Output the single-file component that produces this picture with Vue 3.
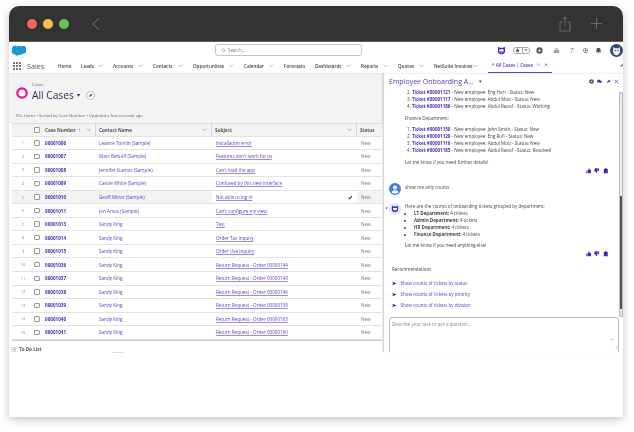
<template>
  <div class="page">
    <div class="window">
      <div class="titlebar">
        <span class="light red"></span>
        <span class="light yellow"></span>
        <span class="light green"></span>
        <svg class="back" viewBox="0 0 8 14"><path d="M7 1 1 7l6 6" /></svg>
        <svg class="share" viewBox="0 0 12 16"><path d="M3.500 6H1v9h10V6H8.500M6 10V1M3.500 3.300 6 1l2.500 2.300" /></svg>
        <svg class="plus" viewBox="0 0 12 12"><path d="M6 0v12M0 6h12" /></svg>
      </div>

      <header class="topbar">
        <svg class="cloud" viewBox="0 0 16 11"><path d="M6.500 1.600A2.900 2.900 0 0 1 11 1.200 3 3 0 0 1 15.800 4.500 2.800 2.800 0 0 1 12.700 8.800 2.500 2.500 0 0 1 8.900 9.800 3 3 0 0 1 3.800 9.300 2.500 2.500 0 0 1 1.600 5 2.900 2.900 0 0 1 6.500 1.600Z" /></svg>
        <div class="search">
          <svg viewBox="0 0 8 8"><circle cx="3.400" cy="3.400" r="2.300" /><path d="m5.200 5.200 2 2" /></svg>
          <span>Search...</span>
        </div>
        <div class="actions">
          <svg class="bot" viewBox="0 0 12 12"><use href="#bot-face" /></svg>
          <div class="favorites">
            <svg viewBox="0 0 6 6"><path d="m3 .3.800 1.800 1.900.2-1.400 1.300.4 1.900L3 4.600l-1.700.9.400-1.900L.3 2.300l1.900-.2Z" /></svg>
            <i></i>
            <svg class="fav-caret" viewBox="0 0 6 6"><path d="M1 2h4L3 4.500Z" /></svg>
          </div>
          <svg class="act add" viewBox="0 0 10 10"><circle cx="5" cy="5" r="4.500" fill="#555" /><path d="M5 2.500v5M2.500 5h5" stroke="#fff" /></svg>
          <svg class="act trail" viewBox="0 0 10 10"><path d="M5 1.500 8 5H2ZM1.500 6.500h7v1.500h-7Z" fill="none" stroke="#666" stroke-width=".9" /></svg>
          <span class="help">?</span>
          <svg class="act gear" viewBox="0 0 10 10"><circle cx="5" cy="5" r="2.800" fill="none" stroke="#666" stroke-width="1.500" stroke-dasharray="1.500 .7" /><circle cx="5" cy="5" r="1" fill="#666" /></svg>
          <svg class="act bell" viewBox="0 0 10 10"><path d="M5 1a3 3 0 0 1 3 3v2l1 1.500H1L2 6V4a3 3 0 0 1 3-3ZM4 8.300h2L5 9.500Z" fill="#555" /></svg>
          <svg class="avatar" viewBox="0 0 14 14">
            <circle cx="7" cy="7" r="7" fill="#2f4a6d" />
            <path d="M3.500 3 5 4.500h4L10.500 3 10.800 8C10.500 10.500 9 12 7 12S3.500 10.500 3.200 8Z" fill="#f4f1e8" />
            <circle cx="5.500" cy="7" r=".7" fill="#333" /><circle cx="8.500" cy="7" r=".7" fill="#333" />
          </svg>
        </div>
      </header>

      <nav class="navbar">
        <div class="launcher">
          <span v-for="n in 9" :key="n"></span>
        </div>
        <span class="app-name">Sales</span>
        <div class="nav-items">
          <div v-for="item in navItems" :key="item.label" class="nav-item">
            <span>{{ item.label }}</span>
            <svg v-if="item.menu" class="chev" viewBox="0 0 6 4"><path d="m.5.700 2.500 2.500L5.500.700" /></svg>
          </div>
          <div class="nav-tab">
            <span>* All Cases | Cases</span>
            <svg class="chev tab-chev" viewBox="0 0 6 4"><path d="m.5.700 2.500 2.500L5.500.700" /></svg>
            <svg class="tab-x" viewBox="0 0 6 6"><path d="m1 1 4 4M5 1 1 5" /></svg>
          </div>
        </div>
        <svg class="nav-pencil" viewBox="0 0 6 6"><path d="M.5 5.500 1 4 4.200.800l1 1L2 5Z" /></svg>
      </nav>

      <main class="content">
        <section class="left">
          <div class="list-head">
            <div class="title-row">
              <svg class="case-icon" viewBox="0 0 12 12"><circle cx="6" cy="6" r="4.700" fill="#fff" stroke="#e5178a" stroke-width="2.200" /><rect x="3" y="4" width="6" height="4.500" rx="1" fill="#f7f7f7" /></svg>
              <div>
                <div class="crumb">Cases</div>
                <div class="title">All Cases <span class="caret">▾</span>
                  <span class="pin">
                    <svg viewBox="0 0 6 6"><path d="M1 5 2.200 2.700 4 1 5 2 3.300 3.800Z" /></svg>
                  </span>
                </div>
              </div>
            </div>
            <div class="meta">50+ Items • Sorted by Case Number • Updated a few seconds ago</div>
          </div>

          <div class="table">
            <div class="row head">
              <div class="cell"></div>
              <div class="cell"><span class="check"></span></div>
              <div class="cell sep">Case Number <span class="arrow">↑</span><svg class="chev" viewBox="0 0 6 4"><path d="m.5.700 2.500 2.500L5.500.700" /></svg></div>
              <div class="cell sep">Contact Name<svg class="chev" viewBox="0 0 6 4"><path d="m.5.700 2.500 2.500L5.500.700" /></svg></div>
              <div class="cell sep">Subject<svg class="chev" viewBox="0 0 6 4"><path d="m.5.700 2.500 2.500L5.500.700" /></svg></div>
              <div class="cell">Status</div>
            </div>
            <div v-for="(c, i) in cases" :key="c.id" class="row" :class="{ hover: i === 4 }">
              <div class="cell num">{{ i + 1 }}</div>
              <div class="cell"><span class="check"></span></div>
              <div class="cell case-id">{{ c.id }}</div>
              <div class="cell contact">{{ c.contact }}</div>
              <div class="cell subject">
                <span>{{ c.subject }}</span>
                <svg v-if="i === 4" class="edit" viewBox="0 0 6 6"><path d="M.5 5.500 1 4 4.200.800l1 1L2 5Z" /></svg>
              </div>
              <div class="cell status">New</div>
            </div>
          </div>

          <div class="todo">
            <svg viewBox="0 0 6 6"><path d="M0 1h1M2 1h4M0 3h1M2 3h4M0 5h1M2 5h4" /></svg>
            <span>To Do List</span>
            <i class="handle"></i>
          </div>
        </section>

        <aside class="right">
          <div class="chat-head">
            <span class="chat-title">Employee Onboarding A...</span>
            <span class="chat-caret">▾</span>
            <div class="chat-tools">
              <svg viewBox="0 0 6 6"><circle cx="3" cy="3" r="2.800" fill="#555" /><circle cx="3" cy="3" r="1" fill="#ddd" /></svg>
              <svg viewBox="0 0 6 6"><path d="M.5 1h3.500v3H1.800L.5 5ZM4.500 2.200h1V5.500L4.300 4.600H2.500" fill="#3a2bb5" /></svg>
              <svg viewBox="0 0 6 6"><path d="M1 5 2.200 2.700 3.500.8l1.800 1.500L3.300 3.800Z" fill="#3a2bb5" /></svg>
              <svg viewBox="0 0 6 6"><path d="m1 1 4 4M5 1 1 5" fill="none" stroke="#3a2bb5" stroke-width=".8" /></svg>
            </div>
          </div>

          <div class="chat-body">
            <div class="messages">
              <ol class="tickets" start="2">
                <li v-for="t in ticketsTop" :key="t.id"><b>Ticket #{{ t.id }}</b> - New employee: {{ t.name }} - Status: {{ t.status }}</li>
              </ol>
              <p class="dept">Finance Department:</p>
              <ol class="tickets second">
                <li v-for="t in ticketsFinance" :key="t.id"><b>Ticket #{{ t.id }}</b> - New employee: {{ t.name }} - Status: {{ t.status }}</li>
              </ol>
              <p class="closing">Let me know if you need further details!</p>
              <div class="feedback">
                <svg viewBox="0 0 6 6"><use href="#thumb" /></svg>
                <svg viewBox="0 0 6 6" class="flip"><use href="#thumb" /></svg>
                <svg viewBox="0 0 6 6"><use href="#clip" /></svg>
              </div>

              <div class="msg user">
                <svg class="msg-avatar" viewBox="0 0 12 12">
                  <circle cx="6" cy="6" r="6" fill="#3b82e0" />
                  <circle cx="6" cy="4.600" r="2" fill="#fff" />
                  <path d="M2.500 9.500C3 7.800 4.500 7.300 6 7.300s3 .5 3.500 2.200C8.500 10.300 7.300 10.600 6 10.600S3.500 10.300 2.500 9.500Z" fill="#fff" />
                </svg>
                <span>show me only counts</span>
              </div>

              <div class="msg bot-msg">
                <i class="pointer"></i>
                <svg class="msg-avatar bot-avatar" viewBox="0 0 12 12"><circle cx="6" cy="6" r="6" fill="#dfe5fb" /><g transform="translate(2 2) scale(.667)"><use href="#bot-face" /></g></svg>
                <div>
                  <p>Here are the counts of onboarding tickets grouped by department:</p>
                  <ul class="counts">
                    <li v-for="d in departments" :key="d"><b>{{ d }}:</b> 4 tickets</li>
                  </ul>
                </div>
              </div>
              <p class="closing after">Let me know if you need anything else!</p>
              <div class="feedback">
                <svg viewBox="0 0 6 6"><use href="#thumb" /></svg>
                <svg viewBox="0 0 6 6" class="flip"><use href="#thumb" /></svg>
                <svg viewBox="0 0 6 6"><use href="#clip" /></svg>
              </div>

              <div class="recs">
                <div class="recs-label">Recommendations</div>
                <div v-for="r in recommendations" :key="r" class="rec">
                  <svg viewBox="0 0 6 6"><path d="M.5 1 5.500 3 .5 5l.6-2Z" /></svg>
                  <span>{{ r }}</span>
                </div>
              </div>
            </div>
            <div class="scrollbar">
              <span class="sb-up"></span>
              <span class="sb-thumb"></span>
              <span class="sb-down"></span>
            </div>
          </div>

          <div class="composer">
            <span>Describe your task or ask a question...</span>
            <svg class="send one" viewBox="0 0 6 6"><path d="M.5 1 5.500 3 .5 5l.6-2Z" /></svg>
            <svg class="send two" viewBox="0 0 6 6"><path d="M.5 1 5.500 3 .5 5l.6-2Z" /></svg>
          </div>
        </aside>
      </main>
    </div>

    <svg class="defs" width="0" height="0">
      <defs>
        <g id="bot-face">
          <path d="M1.500 1 4 2.300h4L10.500 1l.3 5.500C10.800 9.500 8.500 11 6 11S1.200 9.500 1.200 6.500Z" fill="#3d2bc0" />
          <rect x="2.800" y="4.400" width="6.400" height="3" rx="1.500" fill="#fff" />
          <path d="M4 9h4" stroke="#fff" stroke-width=".6" />
        </g>
        <path id="thumb" d="M.3 2.700h1.200v3H.3ZM2 2.700 3.200.3c.6 0 .9.400.8 1L3.800 2.300h1.700c.3 0 .4.300.3.600L5.100 5.400c-.1.200-.2.300-.5.300H2Z" />
        <path id="clip" d="M.8 1h1l.3-.7h1.800L4.200 1h1v4.800H.8Z" />
      </defs>
    </svg>
  </div>
</template>

<script setup>
const navItems = [
  { label: 'Home' },
  { label: 'Leads', menu: true },
  { label: 'Accounts', menu: true },
  { label: 'Contacts', menu: true },
  { label: 'Opportunities', menu: true },
  { label: 'Calendar', menu: true },
  { label: 'Forecasts' },
  { label: 'Dashboards', menu: true },
  { label: 'Reports', menu: true },
  { label: 'Quotes', menu: true },
  { label: 'NetSuite Invoices', menu: true }
];

const returns = ['00000144', '00000143', '00000146', '00000159', '00000163', '00000160'];

const cases = [
  { id: '00001006', contact: 'Leanne Tomlin (Sample)', subject: 'Installation error' },
  { id: '00001007', contact: 'Marc Benioff (Sample)', subject: "Features don't work for us" },
  { id: '00001008', contact: 'Jennifer Stamos (Sample)', subject: "Can't load the app" },
  { id: '00001009', contact: 'Carole White (Sample)', subject: 'Confused by this new interface' },
  { id: '00001010', contact: 'Geoff Minor (Sample)', subject: 'Not able to log in' },
  { id: '00001011', contact: 'Jon Amos (Sample)', subject: "Can't configure my view" },
  { id: '00001013', contact: 'Sandy King', subject: 'Test' },
  { id: '00001014', contact: 'Sandy King', subject: 'Order Tax Inquiry' },
  { id: '00001015', contact: 'Sandy King', subject: 'Order Use Inquiry' },
  ...['00001036', '00001037', '00001038', '00001039', '00001040', '00001041'].map((id, i) => ({
    id,
    contact: 'Sandy King',
    subject: `Return Request - Order ${returns[i]}`
  }))
];

const ticketsTop = [
  { id: '00001121', name: 'Eng Huri', status: 'New' },
  { id: '00001117', name: 'Abdul Moiz', status: 'New' },
  { id: '00001186', name: 'Abdul Raoof', status: 'Working' }
];

const ticketsFinance = [
  { id: '00001150', name: 'John Smith', status: 'New' },
  { id: '00001120', name: 'Eng Rufi', status: 'New' },
  { id: '00001116', name: 'Abdul Moiz', status: 'New' },
  { id: '00001185', name: 'Abdul Raoof', status: 'Resolved' }
];

const departments = ['LT Department', 'Admin Department', 'HR Department', 'Finance Department'];

const recommendations = [
  'Show counts of tickets by status',
  'Show counts of tickets by priority',
  'Show counts of tickets by division'
];
</script>

<style>
html,
body {
  margin: 0;
  background: #fff;
}
</style>

<style scoped>
.page {
  width: 634px;
  height: 432px;
  box-sizing: border-box;
  padding: 6px 11px 15px 9px;
  font-family: "Open Sans", "Noto Sans", sans-serif;
  font-size: 4.6px;
  color: #444;
  background: #fff;
  overflow: hidden;
}

.defs {
  position: absolute;
}

.window {
  height: 100%;
  display: flex;
  flex-direction: column;
  background: #fff;
  border-radius: 10px 10px 2px 2px;
  box-shadow: 0 3px 10px rgba(0, 0, 0, 0.22);
  overflow: hidden;
  filter: blur(0.3px);
}

.titlebar {
  flex: 0 0 36px;
  display: flex;
  align-items: center;
  padding-left: 18px;
  background: #333;
  border-bottom: 1px solid #6b5c58;
  box-sizing: border-box;
}

.light {
  width: 10px;
  height: 10px;
  border-radius: 50%;
  margin-right: 6px;
}

.red { background: #ec6a5e; }
.yellow { background: #f4bf4f; }
.green { background: #61c554; }

.back {
  width: 8px;
  height: 14px;
  margin-left: 17px;
  fill: none;
  stroke: #888;
  stroke-width: 0.8;
}

.share {
  width: 12px;
  height: 16px;
  margin-left: auto;
  fill: none;
  stroke: #777;
  stroke-width: 0.8;
}

.plus {
  width: 11px;
  height: 11px;
  margin: 0 21px 0 20px;
  fill: none;
  stroke: #777;
  stroke-width: 0.9;
}

.topbar {
  flex: 0 0 16px;
  display: flex;
  align-items: center;
  position: relative;
  padding-left: 2px;
}

.cloud {
  width: 15px;
  height: 11px;
  fill: #1b96d8;
}

.search {
  width: 147px;
  height: 12px;
  box-sizing: border-box;
  margin-left: 189px;
  display: flex;
  align-items: center;
  gap: 2px;
  padding-left: 5px;
  border: 0.6px solid #c4c4c4;
  border-radius: 3px;
  color: #777;
  font-size: 4.4px;
}

.search svg {
  width: 5px;
  height: 5px;
  fill: none;
  stroke: #777;
  stroke-width: 0.7;
}

.actions {
  margin-left: auto;
  display: flex;
  align-items: center;
  padding-right: 0.5px;
}

.bot {
  width: 9px;
  height: 9px;
  margin-right: 7.5px;
}

.favorites {
  width: 17px;
  height: 7px;
  box-sizing: border-box;
  display: flex;
  align-items: center;
  justify-content: space-around;
  border: 0.5px solid #aaa;
  border-radius: 3px;
  margin-right: 5.5px;
}

.favorites svg {
  width: 5px;
  height: 5px;
  fill: #555;
}

.favorites .fav-caret {
  width: 4px;
  height: 4px;
}

.favorites i {
  width: 0.5px;
  height: 100%;
  background: #aaa;
}

.act {
  width: 7px;
  height: 7px;
}

.add {
  margin-right: 10px;
}

.trail {
  margin-right: 9px;
}

.help {
  width: 7px;
  margin-right: 6px;
  font-size: 8px;
  line-height: 8px;
  text-align: center;
  color: #666;
}

.gear {
  margin-right: 6px;
}

.bell {
  margin-right: 8px;
}

.avatar {
  width: 13px;
  height: 13px;
}

.navbar {
  flex: 0 0 15px;
  display: flex;
  align-items: center;
  padding-left: 4px;
  box-shadow: 0 1px 1px rgba(0, 0, 0, 0.05);
  position: relative;
}

.launcher {
  width: 8px;
  display: grid;
  grid-template-columns: repeat(3, 2px);
  gap: 1px;
}

.launcher span {
  width: 2px;
  height: 2px;
  background: #777;
}

.app-name {
  width: 31px;
  margin-left: 6px;
  font-size: 7.200px;
  color: #555;
}

.nav-items {
  flex: 1;
  display: grid;
  grid-template-columns: 23px 32px 40px 40px 51px 40px 31px 46px 37px 36px 54px 64px;
  align-items: center;
  height: 15px;
  font-size: 4.600px;
  font-weight: 600;
  color: #444;
}

.nav-item {
  display: flex;
  align-items: center;
  justify-content: space-between;
  padding-right: 10px;
  white-space: nowrap;
}

.nav-tab {
  height: 100%;
  box-sizing: border-box;
  display: flex;
  align-items: center;
  justify-content: center;
  gap: 3px;
  border-bottom: 1px solid #5b3cc4;
  color: #5b3cc4;
  white-space: nowrap;
}

.chev {
  width: 5px;
  height: 3.500px;
  flex: none;
  fill: none;
  stroke: #777;
  stroke-width: 0.6;
}

.tab-chev {
  stroke: #5b3cc4;
}

.tab-x {
  width: 4px;
  height: 4px;
  fill: none;
  stroke: #5b3cc4;
  stroke-width: 0.8;
}

.nav-pencil {
  position: absolute;
  right: -1px;
  top: 5px;
  width: 4px;
  height: 5px;
  fill: #3a2bb5;
}

.content {
  flex: 0 0 279px;
  display: flex;
  min-height: 0;
}

.left {
  flex: 0 0 374px;
  display: flex;
  flex-direction: column;
}

.list-head {
  height: 50px;
  box-sizing: border-box;
  padding: 9px 0 0 7px;
  background: #f3f3f3;
}

.title-row {
  display: flex;
  align-items: flex-end;
  gap: 4px;
}

.case-icon {
  width: 12px;
  height: 12px;
  margin-bottom: 3px;
}

.crumb {
  font-size: 4.200px;
  line-height: 6px;
  color: #666;
}

.title {
  display: flex;
  align-items: center;
  font-size: 10.200px;
  line-height: 14px;
  color: #2e2e52;
}

.caret {
  margin-left: 3px;
  font-size: 6px;
}

.pin {
  width: 9px;
  height: 9px;
  box-sizing: border-box;
  margin-left: 6px;
  border: 0.5px solid #bbb;
  border-radius: 50%;
  background: #fff;
  display: flex;
  align-items: center;
  justify-content: center;
}

.pin svg {
  width: 5px;
  height: 5px;
  fill: #3a2bb5;
}

.meta {
  margin-top: 11px;
  font-size: 4.200px;
  color: #666;
}

.table {
  flex: 0 0 auto;
  margin: 0 1px 0 3px;
  border-bottom: 1px solid #ccc;
  background: #fff;
}

.row {
  display: grid;
  grid-template-columns: 18px 13px 53px 116px 145px 25px;
  height: 13.550px;
  box-sizing: border-box;
  border-bottom: 0.5px solid #e2e2e2;
  align-items: stretch;
}

.row.head {
  background: #f3f3f3;
  font-weight: 700;
  color: #555;
  border-top: 0.5px solid #ddd;
}

.row.hover {
  background: #f3f3f3;
}

.cell {
  display: flex;
  align-items: center;
  padding-left: 3px;
  white-space: nowrap;
  min-width: 0;
}

.cell.sep {
  justify-content: flex-start;
  border-right: 0.5px solid #d5d5d5;
}

.cell.sep .chev {
  margin-left: auto;
  margin-right: 4px;
}

.arrow {
  margin-left: 2px;
}

.row .cell:nth-child(2) {
  padding-left: 4px;
}

.row .cell:nth-child(3) {
  padding-left: 2px;
}

.check {
  width: 5.500px;
  height: 5.500px;
  box-sizing: border-box;
  border: 0.6px solid #999;
  border-radius: 1px;
  background: #fff;
}

.num {
  justify-content: center;
  padding: 0 0 0 4px;
  color: #888;
  font-size: 4px;
}

.case-id {
  font-weight: 700;
  color: #4a2bb8;
}

.contact {
  color: #5b3cc4;
}

.subject {
  color: #5b3cc4;
  justify-content: space-between;
  padding-left: 4px;
  padding-right: 4px;
}

.subject span {
  text-decoration: underline rgba(91, 60, 196, 0.6);
  text-decoration-thickness: 0.3px;
  text-underline-offset: 0.6px;
}

.row.hover .subject {
  background: #fff;
}

.edit {
  width: 5px;
  height: 5px;
  fill: #3a2bb5;
}

.status {
  color: #777;
  padding-left: 4px;
}

.todo {
  flex: 1;
  display: flex;
  align-items: flex-start;
  gap: 3px;
  padding: 5px 0 0 2px;
  font-size: 4.600px;
  font-weight: 700;
  color: #555;
  position: relative;
}

.todo svg {
  width: 5px;
  height: 5px;
  margin-top: 1px;
  fill: none;
  stroke: #777;
  stroke-width: 0.6;
}

.handle {
  position: absolute;
  left: 103px;
  top: 11px;
  width: 12px;
  height: 1px;
  background: #ddd;
}

.right {
  flex: 1;
  min-width: 0;
  display: flex;
  flex-direction: column;
  border-left: 1px solid #d8d8d8;
  box-shadow: -1px 0 1px rgba(0, 0, 0, 0.08);
}

.chat-head {
  height: 15px;
  flex: none;
  box-sizing: border-box;
  display: flex;
  align-items: center;
  padding: 1px 4px 0 5px;
}

.chat-title {
  font-size: 7px;
  color: #4f41b0;
}

.chat-caret {
  margin-left: 5px;
  font-size: 5px;
  color: #3a2bb5;
}

.chat-tools {
  margin-left: auto;
  display: flex;
  gap: 3.500px;
}

.chat-tools svg {
  width: 5px;
  height: 5px;
}

.chat-body {
  flex: 0 0 229px;
  display: flex;
  overflow: hidden;
}

.messages {
  flex: 1;
  min-width: 0;
  padding: 0 10px 0 8px;
  line-height: 7px;
  font-size: 4.500px;
  margin-top: 0.500px;
}

p {
  margin: 0;
}

.tickets {
  margin: 0;
  padding-left: 20px;
  white-space: nowrap;
}

.tickets b {
  color: #4a2bb8;
}

.dept {
  margin: 5px 0 0 13px;
}

.second {
  margin-top: 4.500px;
}

.closing {
  margin: 4.500px 0 0 13px;
}

.closing.after {
  margin-top: 4px;
}

.feedback {
  margin-top: 2px;
  display: flex;
  justify-content: flex-end;
  gap: 3px;
  height: 7px;
  align-items: center;
  padding-right: 1px;
}

.feedback svg {
  width: 5.500px;
  height: 5.500px;
  fill: #3a2bb5;
}

.feedback .flip {
  transform: rotate(180deg);
}

.msg {
  display: flex;
  align-items: center;
  gap: 1px;
  position: relative;
}

.msg-avatar {
  width: 12px;
  height: 12px;
  flex: none;
}

.user {
  margin: 8.500px 0 0 -3px;
  gap: 4px;
  height: 12px;
}

.user span {
  margin-top: -4px;
}

.bot-msg {
  margin: 7.500px 0 0 -3px;
  gap: 4px;
  align-items: flex-start;
}

.bot-avatar {
  margin-top: 0;
}

.pointer {
  position: absolute;
  left: -3px;
  top: 4px;
  border-left: 2px solid #3a2bb5;
  border-top: 1.500px solid transparent;
  border-bottom: 1.500px solid transparent;
}

.counts {
  margin: 0;
  padding-left: 9px;
}

.counts b {
  font-weight: 700;
}

.recs {
  margin: 8px 0 0 0;
}

.recs-label {
  margin-bottom: 7px;
}

.rec {
  height: 7px;
  margin-bottom: 4px;
  display: flex;
  align-items: center;
  gap: 3.500px;
  color: #4f41c0;
}

.rec svg {
  width: 5px;
  height: 5px;
  fill: #3a2bb5;
}

.scrollbar {
  flex: 0 0 4px;
  margin-top: 4px;
  display: flex;
  flex-direction: column;
  background: #eee;
  border: 0.5px solid #bbb;
  box-sizing: border-box;
}

.sb-up,
.sb-down {
  height: 5px;
  flex: none;
  background: #e4e4e4;
}

.sb-thumb {
  margin: 98px 0 2px;
  height: 113px;
  background: #555;
}

.composer {
  flex: none;
  height: 35px;
  box-sizing: border-box;
  margin: 0 4px 0 5px;
  border: 0.7px solid #bbb;
  border-bottom: none;
  border-radius: 4px 4px 0 0;
  padding: 3px 0 0 2px;
  font-size: 4.500px;
  color: #888;
  position: relative;
}

.send {
  position: absolute;
  width: 5px;
  height: 5px;
  fill: #ddd;
}

.one {
  right: 3.500px;
  top: 18.500px;
}

.two {
  right: -1.500px;
  top: 26.500px;
}
</style>
